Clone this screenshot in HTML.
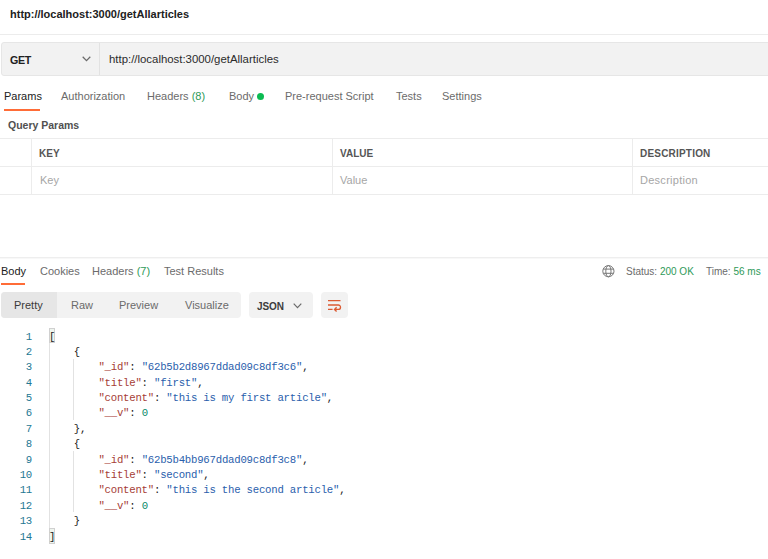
<!DOCTYPE html>
<html><head><meta charset="utf-8">
<style>
*{box-sizing:border-box;margin:0;padding:0}
html,body{width:768px;height:559px;overflow:hidden;background:#fff}
body{position:relative;font-family:"Liberation Sans",sans-serif;color:#212121}
.a{position:absolute;white-space:nowrap}
.title{left:10px;top:7.6px;font-size:11px;font-weight:bold;color:#212121}
.hr{left:0;width:768px;height:1px;background:#ececec}
.bar{left:1px;top:42px;width:780px;height:34px;background:#f2f2f2;border:1px solid #e6e6e6;border-radius:3px}
.method{left:10px;top:53.5px;font-size:10.7px;font-weight:bold;color:#212121;letter-spacing:-0.3px}
.vdiv{left:99px;top:43px;width:1px;height:32px;background:#e2e2e2}
.url{left:109px;top:53px;font-size:11.4px;color:#2b2b2b}
.tab{top:90px;font-size:11px;color:#6b6b6b}
.green{color:#2e9a58}
.orange{background:#ff6c37}
.qp{left:8px;top:119px;font-size:10.5px;font-weight:bold;color:#505050}
.th{font-size:10px;font-weight:bold;color:#555;top:147.5px}
.ph{font-size:11px;color:#a6a6a6;top:174px}
.rtab{top:265px;font-size:11px;color:#6b6b6b}
.seg{left:1px;top:292px;width:240px;height:26px;background:#f2f2f2;border-radius:4px}
.segsel{left:1px;top:292px;width:56px;height:26px;background:#e6e6e6;border-radius:4px 0 0 4px}
.segt{top:298.6px;font-size:11px;color:#6b6b6b}
.codewrap{font-family:"Liberation Mono",monospace;font-size:10.7px;letter-spacing:-0.24px;line-height:15.4px}
.cl{height:15.4px;padding-left:49px;position:relative;white-space:pre}
.ln{position:absolute;left:0;width:32px;text-align:right;color:#237893}
.guide{width:1px;background:#e2e2e2}
.bm{width:6px;height:16px;border:1px solid #d0d0d0;background:#eef5ee}
.k{color:#a63d36}
.s{color:#2a60ac}
.n{color:#0a8a6a}
.p{color:#212121}
</style></head><body>
<div class="a title">http://localhost:3000/getAllarticles</div>
<div class="a hr" style="top:34px"></div>
<div class="a bar"></div>
<div class="a method">GET</div>
<svg class="a" style="left:82px;top:56px" width="9" height="6" viewBox="0 0 9 6"><path d="M0.7 0.7 L4.5 4.6 L8.3 0.7" fill="none" stroke="#6b6b6b" stroke-width="1.25"/></svg>
<div class="a vdiv"></div>
<div class="a url">http://localhost:3000/getAllarticles</div>

<div class="a tab" style="left:4px;color:#212121">Params</div>
<div class="a orange" style="left:4px;top:109px;width:36px;height:2px"></div>
<div class="a tab" style="left:61px">Authorization</div>
<div class="a tab" style="left:147px">Headers <span class="green">(8)</span></div>
<div class="a tab" style="left:229px">Body</div>
<div class="a" style="left:257px;top:93px;width:7px;height:7px;border-radius:50%;background:#0cbb52"></div>
<div class="a tab" style="left:285px">Pre-request Script</div>
<div class="a tab" style="left:396px">Tests</div>
<div class="a tab" style="left:442px">Settings</div>

<div class="a qp">Query Params</div>
<div class="a hr" style="top:138px"></div>
<div class="a hr" style="top:166px"></div>
<div class="a hr" style="top:194px"></div>
<div class="a" style="left:31px;top:138px;width:1px;height:57px;background:#ececec"></div>
<div class="a" style="left:332px;top:138px;width:1px;height:57px;background:#ececec"></div>
<div class="a" style="left:632px;top:138px;width:1px;height:57px;background:#ececec"></div>
<div class="a th" style="left:39px">KEY</div>
<div class="a th" style="left:340px">VALUE</div>
<div class="a th" style="left:640px;letter-spacing:0.2px">DESCRIPTION</div>
<div class="a ph" style="left:40px">Key</div>
<div class="a ph" style="left:340px">Value</div>
<div class="a ph" style="left:640px;letter-spacing:0.27px">Description</div>

<div class="a hr" style="top:257px;background:#eeeeee"></div><div class="a hr" style="top:258px;background:#f8f8f8"></div>
<div class="a rtab" style="left:1px;color:#212121">Body</div>
<div class="a orange" style="left:1px;top:283px;width:24px;height:2px"></div>
<div class="a rtab" style="left:40px">Cookies</div>
<div class="a rtab" style="left:92px">Headers <span class="green">(7)</span></div>
<div class="a rtab" style="left:164px">Test Results</div>
<svg class="a" style="left:601px;top:264px" width="15" height="15" viewBox="0 0 15 15"><g fill="none" stroke="#777" stroke-width="1"><circle cx="7.4" cy="7.2" r="5.6"/><ellipse cx="7.4" cy="7.2" rx="2.6" ry="5.6"/><path d="M2.3 5.1h10.2M2.3 9.3h10.2"/></g></svg>
<div class="a rtab" style="left:626px;font-size:10px;top:266px">Status: <span class="green">200 OK</span></div>
<div class="a rtab" style="left:706px;font-size:10px;top:266px">Time: <span class="green">56 ms</span></div>

<div class="a seg"></div>
<div class="a segsel"></div>
<div class="a segt" style="left:14px;color:#3a3a3a">Pretty</div>
<div class="a segt" style="left:71px">Raw</div>
<div class="a segt" style="left:119px">Preview</div>
<div class="a segt" style="left:185px">Visualize</div>
<div class="a" style="left:249px;top:292px;width:64px;height:26px;background:#f2f2f2;border-radius:4px"></div>
<div class="a segt" style="left:257px;font-weight:bold;color:#3c3c3c;font-size:10px;top:300.8px;letter-spacing:-0.1px">JSON</div>
<svg class="a" style="left:293px;top:303px" width="9" height="6" viewBox="0 0 9 6"><path d="M0.7 0.7 L4.5 4.6 L8.3 0.7" fill="none" stroke="#6b6b6b" stroke-width="1.2"/></svg>
<div class="a" style="left:321px;top:292px;width:27px;height:26px;background:#f2f2f2;border-radius:4px"></div>
<svg class="a" style="left:320px;top:292px" width="28" height="26" viewBox="0 0 28 26"><g fill="none" stroke="#dc5a32" stroke-width="1.35"><path d="M8 8.6H20.5M8 13H18.3a2.2 2.2 0 0 1 0 4.4H15M8 17.4H12.6M16.6 15.3L14.5 17.4L16.6 19.5"/></g></svg>

<div class="a guide" style="left:49px;top:343px;height:185px"></div>
<div class="a guide" style="left:73px;top:359px;height:61px"></div>
<div class="a guide" style="left:73px;top:451px;height:61px"></div>
<div class="a bm" style="left:49px;top:328px;height:15px"></div>
<div class="a bm" style="left:49px;top:528px"></div>
<div class="a codewrap" style="left:0;top:329.5px">
<div class="cl"><span class="ln">1</span><span class="p">[</span></div>
<div class="cl"><span class="ln">2</span>    <span class="p">{</span></div>
<div class="cl"><span class="ln">3</span>        <span class="k">"_id"</span><span class="p">: </span><span class="s">"62b5b2d8967ddad09c8df3c6"</span><span class="p">,</span></div>
<div class="cl"><span class="ln">4</span>        <span class="k">"title"</span><span class="p">: </span><span class="s">"first"</span><span class="p">,</span></div>
<div class="cl"><span class="ln">5</span>        <span class="k">"content"</span><span class="p">: </span><span class="s">"this is my first article"</span><span class="p">,</span></div>
<div class="cl"><span class="ln">6</span>        <span class="k">"__v"</span><span class="p">: </span><span class="n">0</span></div>
<div class="cl"><span class="ln">7</span>    <span class="p">},</span></div>
<div class="cl"><span class="ln">8</span>    <span class="p">{</span></div>
<div class="cl"><span class="ln">9</span>        <span class="k">"_id"</span><span class="p">: </span><span class="s">"62b5b4bb967ddad09c8df3c8"</span><span class="p">,</span></div>
<div class="cl"><span class="ln">10</span>        <span class="k">"title"</span><span class="p">: </span><span class="s">"second"</span><span class="p">,</span></div>
<div class="cl"><span class="ln">11</span>        <span class="k">"content"</span><span class="p">: </span><span class="s">"this is the second article"</span><span class="p">,</span></div>
<div class="cl"><span class="ln">12</span>        <span class="k">"__v"</span><span class="p">: </span><span class="n">0</span></div>
<div class="cl"><span class="ln">13</span>    <span class="p">}</span></div>
<div class="cl"><span class="ln">14</span><span class="p">]</span></div>
</div>
</body></html>
